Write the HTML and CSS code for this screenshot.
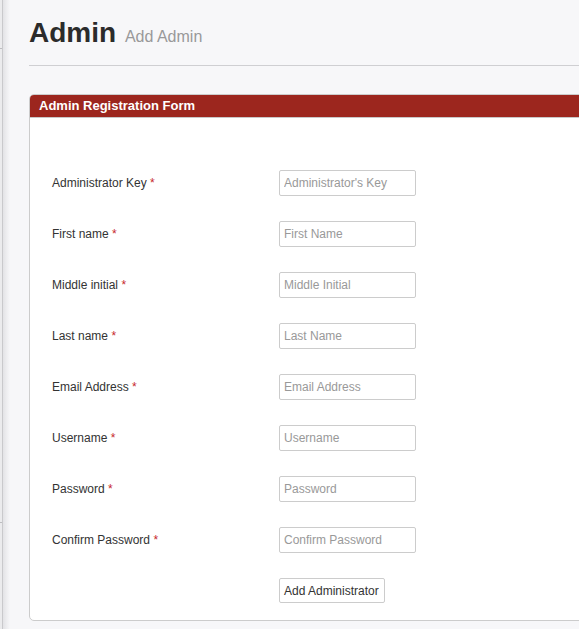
FILE: index.html
```html
<!DOCTYPE html>
<html>
<head>
<meta charset="utf-8">
<title>Admin - Add Admin</title>
<link rel="stylesheet" href="styles.css">
</head>
<body>
<div class="layout">
  <aside class="sidebar">
    <div class="side-item side-top"></div>
    <div class="side-item side-mid"></div>
  </aside>
  <main class="main">
    <header class="page-header">
      <h1 class="title">Admin <small class="subtitle">Add Admin</small></h1>
    </header>
    <section class="panel">
      <div class="panel-heading">Admin Registration Form</div>
      <form class="panel-body">
        <div class="row"><label class="label">Administrator Key <span class="req">*</span></label><input class="field" type="text" placeholder="Administrator's Key"></div>
        <div class="row"><label class="label">First name <span class="req">*</span></label><input class="field" type="text" placeholder="First Name"></div>
        <div class="row"><label class="label">Middle initial <span class="req">*</span></label><input class="field" type="text" placeholder="Middle Initial"></div>
        <div class="row"><label class="label">Last name <span class="req">*</span></label><input class="field" type="text" placeholder="Last Name"></div>
        <div class="row"><label class="label">Email Address <span class="req">*</span></label><input class="field" type="text" placeholder="Email Address"></div>
        <div class="row"><label class="label">Username <span class="req">*</span></label><input class="field" type="text" placeholder="Username"></div>
        <div class="row"><label class="label">Password <span class="req">*</span></label><input class="field" type="password" placeholder="Password"></div>
        <div class="row"><label class="label">Confirm Password <span class="req">*</span></label><input class="field" type="password" placeholder="Confirm Password"></div>
        <div class="row"><span class="label"></span><button class="btn" type="button">Add Administrator</button></div>
      </form>
    </section>
  </main>
</div>
</body>
</html>
```

FILE: styles.css
```css
html, body {
  margin: 0;
  padding: 0;
  background: #f7f7f9;
  overflow: hidden;
  font-family: "Liberation Sans", Arial, sans-serif;
}

.layout {
  display: flex;
  width: 900px;
  min-height: 629px;
}

.sidebar {
  width: 2px;
  flex: 0 0 2px;
  background: #ebebed;
  border-right: 1px solid #c9c9cc;
  display: flex;
  flex-direction: column;
}

.side-top {
  height: 48px;
  border-bottom: 1px solid #bdbdc0;
}

.side-mid {
  height: 473px;
  border-bottom: 1px solid #bdbdc0;
}

.main {
  flex: 1;
  padding-left: 26px;
  background: linear-gradient(to right, #e3e3e6 0, #f7f7f9 7px) no-repeat;
  background-color: #f7f7f9;
}

.page-header {
  padding-top: 16px;
  padding-bottom: 15px;
  border-bottom: 1px solid #cfcfd2;
}

.title {
  margin: 0;
  font-size: 28px;
  line-height: 34px;
  height: 34px;
  font-weight: bold;
  color: #2b2b2b;
}

.subtitle {
  font-size: 16px;
  line-height: 16px;
  font-weight: normal;
  color: #999999;
  margin-left: 1px;
}

.panel {
  margin-top: 28px;
  background: #ffffff;
  border: 1px solid #cccccc;
  border-radius: 5px 0 0 5px;
  overflow: hidden;
}

.panel-heading {
  background: #9c261e;
  color: #ffffff;
  font-weight: bold;
  font-size: 13px;
  height: 22px;
  line-height: 22px;
  padding-left: 9px;
  border-bottom: 1px solid #c8c8c8;
}

.panel-body {
  margin: 0;
  padding: 52px 0 17px 22px;
  display: flex;
  flex-direction: column;
  gap: 25px;
}

.row {
  display: flex;
  align-items: center;
}

.label {
  width: 227px;
  flex: 0 0 227px;
  font-size: 12px;
  color: #333333;
}

.req {
  color: #c7282c;
}

.field {
  box-sizing: border-box;
  width: 137px;
  height: 26px;
  margin: 0;
  padding: 0 4px;
  border: 1px solid #cccccc;
  border-radius: 2px;
  background: #ffffff;
  font-family: "Liberation Sans", Arial, sans-serif;
  font-size: 12px;
  color: #333333;
  outline: none;
}

.field::placeholder {
  color: #999999;
  opacity: 1;
}

.btn {
  box-sizing: border-box;
  height: 25px;
  margin: 0;
  padding: 0 5px 0 4px;
  background: #ffffff;
  border: 1px solid #cccccc;
  border-radius: 2px;
  font-family: "Liberation Sans", Arial, sans-serif;
  font-size: 12px;
  color: #333333;
}
```
